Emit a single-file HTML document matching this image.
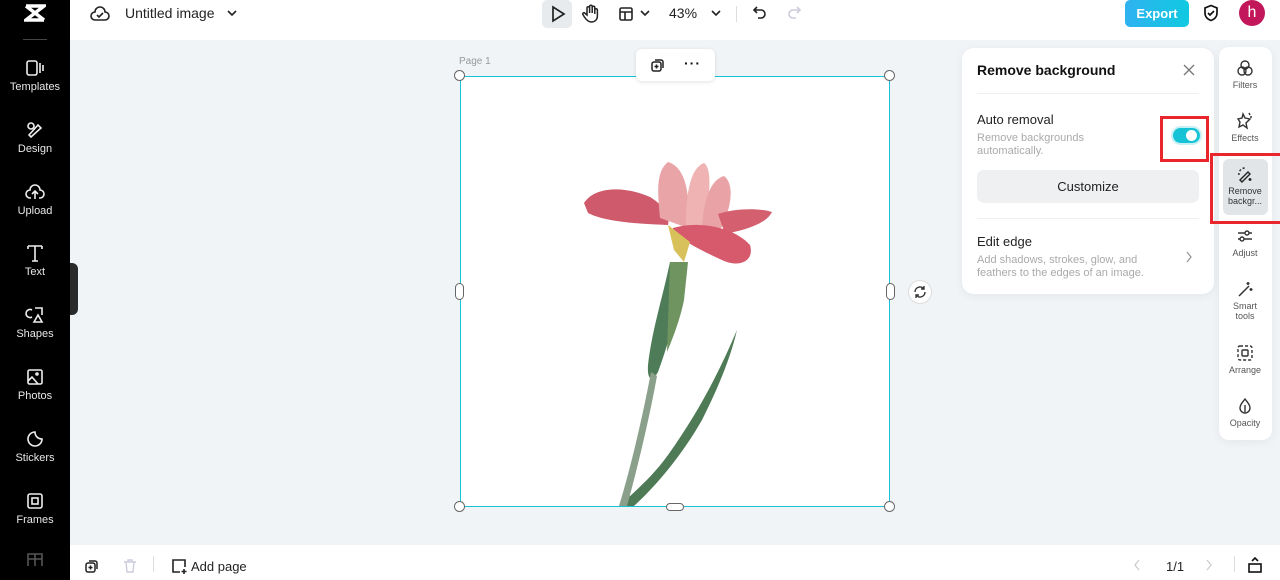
<!DOCTYPE html>
<html><head><meta charset="utf-8"><style>
*{box-sizing:border-box;margin:0;padding:0}
body{width:1280px;height:580px;overflow:hidden;font-family:"Liberation Sans",sans-serif;background:#f1f4f7;position:relative;color:#111}
.abs{position:absolute}
#side{left:0;top:0;width:70px;height:580px;background:#000}
.si{position:absolute;left:0;width:70px;text-align:center;color:#e8e8e8;font-size:11px}
.si svg{display:block;margin:0 auto 4px}
#top{left:70px;top:0;width:1210px;height:40px;background:#fff}
#bot{left:70px;top:545px;width:1210px;height:35px;background:#fff}
.rt{position:absolute;left:0;width:52px;text-align:center;font-size:9px;color:#555;line-height:10px}
.rt svg{display:block;margin:0 auto 3px}
.h{position:absolute;width:11px;height:11px;border:1px solid #666;background:#fff;border-radius:50%}
</style></head><body>
<div id="side" class="abs">
<svg class="abs" style="left:24px;top:4px" width="22" height="18" viewBox="0 0 22 18"><path d="M2 2h18L2 16h18M2 2l18 14" stroke="#fff" stroke-width="3.5" fill="none"/></svg>
<div class="abs" style="left:23px;top:39px;width:24px;height:1px;background:#444"></div>
<div class="si" style="top:59px"><svg width="20" height="18" viewBox="0 0 20 18" fill="none" stroke="#eee" stroke-width="1.6"><rect x="2" y="2" width="10" height="14" rx="2"/><path d="M15 4v10M18 6v6"/></svg>Templates</div>
<div class="si" style="top:121px"><svg width="20" height="18" viewBox="0 0 20 18" fill="none" stroke="#eee" stroke-width="1.6"><circle cx="6" cy="5" r="3"/><path d="M4 14l9-10 3 3-10 9z"/></svg>Design</div>
<div class="si" style="top:183px"><svg width="20" height="18" viewBox="0 0 20 18" fill="none" stroke="#eee" stroke-width="1.6"><path d="M6 15H5a4 4 0 010-8 5 5 0 0110 0 4 4 0 010 8h-1M10 16V9M7 11l3-3 3 3"/></svg>Upload</div>
<div class="si" style="top:244px"><svg width="20" height="18" viewBox="0 0 20 18" fill="none" stroke="#eee" stroke-width="1.6"><path d="M3 2h14M10 2v15M7 17h6M3 2v3M17 2v3"/></svg>Text</div>
<div class="si" style="top:306px"><svg width="20" height="18" viewBox="0 0 20 18" fill="none" stroke="#eee" stroke-width="1.6"><path d="M7 4a4 4 0 100 7M10 2h7v7M9 16l4-7 4 7z"/></svg>Shapes</div>
<div class="si" style="top:368px"><svg width="20" height="18" viewBox="0 0 20 18" fill="none" stroke="#eee" stroke-width="1.6"><rect x="3" y="2" width="14" height="14" rx="1.5"/><path d="M3 13l4-4 6 7"/><circle cx="12" cy="6" r="1"/></svg>Photos</div>
<div class="si" style="top:430px"><svg width="20" height="18" viewBox="0 0 20 18" fill="none" stroke="#eee" stroke-width="1.6"><path d="M17 9a7 7 0 11-7-7c0 4 3 7 7 7z"/></svg>Stickers</div>
<div class="si" style="top:492px"><svg width="20" height="18" viewBox="0 0 20 18" fill="none" stroke="#eee" stroke-width="1.6"><rect x="3" y="2" width="14" height="14" rx="2"/><rect x="7" y="6" width="6" height="6"/></svg>Frames</div>
<svg class="abs" style="left:26px;top:552px" width="18" height="14" viewBox="0 0 18 14" fill="none" stroke="#555" stroke-width="1.6"><path d="M2 14V2h14v12M9 2v12M2 7h14"/></svg>
</div>
<div class="abs" style="left:70px;top:263px;width:8px;height:52px;background:#2a2a2a;border-radius:0 6px 6px 0"></div>

<div id="top" class="abs">
<svg class="abs" style="left:20px;top:5px" width="20" height="18" viewBox="0 0 20 18" fill="none" stroke="#222" stroke-width="1.6"><path d="M6 15H5a4 4 0 010-8 5 5 0 0110 0 4 4 0 010 8z"/><path d="M7 10l2 2 4-4"/></svg>
<div class="abs" style="left:55px;top:5px;font-size:14px;color:#222">Untitled image</div>
<svg class="abs" style="left:157px;top:9px" width="10" height="8"><path d="M1 2l4 4 4-4" stroke="#222" stroke-width="1.6" fill="none"/></svg>
<div class="abs" style="left:472px;top:0;width:30px;height:28px;background:#e8ebee;border-radius:5px"></div>
<svg class="abs" style="left:480px;top:5px" width="16" height="18" viewBox="0 0 16 18"><path d="M3 2l11 7-11 7z" fill="none" stroke="#222" stroke-width="1.7"/></svg>
<svg class="abs" style="left:512px;top:4px" width="18" height="20" viewBox="0 0 18 20" fill="none" stroke="#222" stroke-width="1.5"><path d="M5 11V4a1.3 1.3 0 012.6 0v5V2.5a1.3 1.3 0 012.6 0V9V3.5a1.3 1.3 0 012.6 0V10V6a1.3 1.3 0 012.6 0v6c0 4-3 6-6 6s-5-2-7-5l-1.5-2.5a1.2 1.2 0 012-1.3z"/></svg>
<svg class="abs" style="left:548px;top:6px" width="16" height="16" viewBox="0 0 16 16" fill="none" stroke="#222" stroke-width="1.6"><rect x="2" y="2" width="12" height="12" rx="1.5"/><path d="M2 6h12M7 6v8"/></svg>
<svg class="abs" style="left:570px;top:9px" width="10" height="8"><path d="M1 2l4 4 4-4" stroke="#222" stroke-width="1.6" fill="none"/></svg>
<div class="abs" style="left:599px;top:5px;font-size:14px;color:#222">43%</div>
<svg class="abs" style="left:641px;top:9px" width="10" height="8"><path d="M1 2l4 4 4-4" stroke="#222" stroke-width="1.6" fill="none"/></svg>
<div class="abs" style="left:666px;top:6px;width:1px;height:16px;background:#ddd"></div>
<svg class="abs" style="left:682px;top:5px" width="16" height="16" viewBox="0 0 16 16" fill="none" stroke="#222" stroke-width="1.6"><path d="M5 2L2 5l3 3M2 5h7a4 4 0 010 8H6"/></svg>
<svg class="abs" style="left:716px;top:5px" width="16" height="16" viewBox="0 0 16 16" fill="none" stroke="#ccd" stroke-width="1.6"><path d="M11 2l3 3-3 3M14 5H7a4 4 0 000 8h3"/></svg>
<div class="abs" style="left:1055px;top:0;width:64px;height:27px;border-radius:5px;background:linear-gradient(90deg,#2fb2f0,#10c9e0);color:#fff;font-weight:bold;font-size:13px;text-align:center;line-height:27px">Export</div>
<svg class="abs" style="left:1132px;top:4px" width="18" height="18" viewBox="0 0 18 18" fill="none" stroke="#111" stroke-width="1.7"><path d="M9 1.5l6 2.5v5c0 4-3 6.5-6 7.5-3-1-6-3.5-6-7.5V4z"/><path d="M6 9l2 2 4-4"/></svg>
<div class="abs" style="left:1169px;top:0;width:26px;height:26px;border-radius:50%;background:#c2185b;color:#fff;font-size:16px;text-align:center;line-height:25px">h</div>
</div>

<!-- canvas -->
<div class="abs" style="left:459px;top:56px;font-size:10px;color:#999">Page 1</div>
<div class="abs" style="left:460px;top:76px;width:430px;height:431px;background:#fff;border:1.5px solid #16c3d6"></div>
<svg class="abs" style="left:460px;top:76px" width="430" height="431" viewBox="460 76 430 431">
<path d="M737 330C720 370 700 410 668 455 650 480 630 495 620 506L634 506C657 485 682 455 702 420 717 390 730 360 737 330z" fill="#4e7a55"/>
<path d="M670 262C662 300 652 330 648 365 647 380 652 383 658 372 670 340 680 300 686 262z" fill="#4f7c58"/>
<path d="M651 372C642 420 630 470 619 506L627 506C637 470 649 420 657 376z" fill="#8aa08a"/>
<path d="M670 262L688 262 684 300C680 320 672 340 667 352z" fill="#6f9460"/>
<path d="M584 203C595 186 625 186 650 197 665 206 670 218 668 225 640 224 605 222 588 213z" fill="#cf5a6c"/>
<path d="M660 218C658 195 655 172 668 162 688 168 690 200 688 228z" fill="#e9a4a8"/>
<path d="M686 225C686 195 690 168 704 163 714 170 708 205 704 230z" fill="#efb3b3"/>
<path d="M702 226C704 200 710 180 724 176 736 185 730 212 720 230z" fill="#e9a2a6"/>
<path d="M718 214C735 208 760 208 772 212 766 224 745 230 725 234z" fill="#d4606f"/>
<path d="M673 228C700 220 735 228 750 245 755 262 738 268 722 260 700 250 685 242 673 232z" fill="#d65a6c"/>
<path d="M668 225l6 25 10 12 6-20z" fill="#d8c05a"/>
</svg>
<div class="h" style="left:454px;top:70px"></div><div class="h" style="left:884px;top:70px"></div>
<div class="h" style="left:454px;top:501px"></div><div class="h" style="left:884px;top:501px"></div>
<div class="abs" style="left:455px;top:283px;width:9px;height:17px;border:1px solid #666;background:#fff;border-radius:5px"></div>
<div class="abs" style="left:886px;top:283px;width:9px;height:17px;border:1px solid #666;background:#fff;border-radius:5px"></div>
<div class="abs" style="left:666px;top:503px;width:18px;height:8px;border:1px solid #666;background:#fff;border-radius:5px"></div>
<div class="abs" style="left:908px;top:280px;width:24px;height:24px;border-radius:50%;background:#fff;border:1px solid #ddd"></div>
<svg class="abs" style="left:913px;top:285px" width="14" height="14" viewBox="0 0 14 14" fill="none" stroke="#333" stroke-width="1.4"><path d="M2 7a5 5 0 019-3M12 7a5 5 0 01-9 3M11 1v3H8M3 13v-3h3"/></svg>
<div class="abs" style="left:636px;top:49px;width:79px;height:32px;background:#fff;border-radius:6px;box-shadow:0 1px 4px rgba(0,0,0,.12)"></div>
<svg class="abs" style="left:650px;top:57px" width="16" height="16" viewBox="0 0 16 16" fill="none" stroke="#222" stroke-width="1.5"><rect x="2" y="5" width="9" height="9" rx="2"/><path d="M5 3h6a2 2 0 012 2v6M6.5 7.5v4M4.5 9.5h4"/></svg>
<div class="abs" style="left:684px;top:55px;font-size:14px;font-weight:bold;letter-spacing:1px">···</div>

<!-- panel -->
<div class="abs" style="left:962px;top:48px;width:252px;height:246px;background:#fff;border-radius:12px;box-shadow:0 2px 10px rgba(0,0,0,.06)">
<div class="abs" style="left:15px;top:14px;font-size:14px;font-weight:bold">Remove background</div>
<svg class="abs" style="left:221px;top:16px" width="12" height="12"><path d="M1 1l10 10M11 1L1 11" stroke="#777" stroke-width="1.3"/></svg>
<div class="abs" style="left:15px;top:45px;width:222px;height:1px;background:#eee"></div>
<div class="abs" style="left:15px;top:64px;font-size:13px;color:#222">Auto removal</div>
<div class="abs" style="left:15px;top:84px;font-size:11px;color:#aaa;line-height:13px">Remove backgrounds<br>automatically.</div>
<div class="abs" style="left:211px;top:80px;width:27px;height:15px;border-radius:8px;background:#16c3d6;box-shadow:0 0 0 2px #c6f0f4"></div>
<div class="abs" style="left:224px;top:82px;width:11px;height:11px;border-radius:50%;background:#fff"></div>
<div class="abs" style="left:15px;top:122px;width:222px;height:33px;border-radius:7px;background:#eef0f2;text-align:center;line-height:33px;font-size:13px;color:#222">Customize</div>
<div class="abs" style="left:15px;top:170px;width:222px;height:1px;background:#eee"></div>
<div class="abs" style="left:15px;top:186px;font-size:13px;color:#222">Edit edge</div>
<div class="abs" style="left:15px;top:206px;font-size:11px;color:#aaa;line-height:13px">Add shadows, strokes, glow, and<br>feathers to the edges of an image.</div>
<svg class="abs" style="left:223px;top:203px" width="8" height="12"><path d="M2 1l4 5-4 5" stroke="#999" stroke-width="1.3" fill="none"/></svg>
</div>
<div class="abs" style="left:1160px;top:116px;width:49px;height:46px;border:3px solid #e8262c"></div>

<!-- right toolbar -->
<div class="abs" style="left:1219px;top:47px;width:53px;height:393px;background:#fff;border-radius:10px;box-shadow:0 2px 10px rgba(0,0,0,.06)">
<div class="rt" style="top:12px"><svg width="18" height="18" viewBox="0 0 18 18" fill="none" stroke="#333" stroke-width="1.4"><circle cx="9" cy="6" r="4"/><circle cx="6" cy="12" r="4"/><circle cx="12" cy="12" r="4"/></svg>Filters</div>
<div class="rt" style="top:65px"><svg width="18" height="18" viewBox="0 0 18 18" fill="none" stroke="#333" stroke-width="1.4"><path d="M7 2l2 4 5 1-4 4 1 5-4-3-4 2 1-5-2-3 4-1zM13 1l1 2M16 5l-2 0"/></svg>Effects</div>
<div class="abs" style="left:4px;top:112px;width:45px;height:56px;background:#e2e5e8;border-radius:6px"></div>
<div class="rt" style="top:118px;color:#333"><svg width="18" height="18" viewBox="0 0 18 18" fill="none" stroke="#222" stroke-width="1.4"><path d="M3 10a6 6 0 016-7" stroke-dasharray="2 2"/><path d="M4 15l8-8 2 2-8 8z"/><path d="M14 13v3M12.5 14.5h3"/></svg>Remove<br>backgr...</div>
<div class="rt" style="top:180px"><svg width="18" height="18" viewBox="0 0 18 18" fill="none" stroke="#333" stroke-width="1.4"><path d="M2 6h14M2 12h14"/><circle cx="11" cy="6" r="2" fill="#fff"/><circle cx="6" cy="12" r="2" fill="#fff"/></svg>Adjust</div>
<div class="rt" style="top:233px"><svg width="18" height="18" viewBox="0 0 18 18" fill="none" stroke="#333" stroke-width="1.5"><path d="M3 16l10-10M12 2v3M10.5 3.5h3M15 8v3M13.5 9.5h3"/></svg>Smart<br>tools</div>
<div class="rt" style="top:297px"><svg width="18" height="18" viewBox="0 0 18 18" fill="none" stroke="#333" stroke-width="1.4"><rect x="2" y="2" width="14" height="14" rx="2" stroke-dasharray="3 2"/><rect x="6" y="6" width="6" height="6" rx="1"/></svg>Arrange</div>
<div class="rt" style="top:350px"><svg width="18" height="18" viewBox="0 0 18 18" fill="none" stroke="#333" stroke-width="1.4"><path d="M9 2c3 4 5 6 5 9a5 5 0 01-10 0c0-3 2-5 5-9z"/><path d="M9 8v7"/></svg>Opacity</div>
</div>

<div id="bot" class="abs">
<svg class="abs" style="left:14px;top:13px" width="16" height="16" viewBox="0 0 16 16" fill="none" stroke="#222" stroke-width="1.5"><rect x="2" y="5" width="9" height="9" rx="2"/><path d="M5 3h6a2 2 0 012 2v6M6.5 7.5v4M4.5 9.5h4"/></svg>
<svg class="abs" style="left:52px;top:13px" width="16" height="16" viewBox="0 0 16 16" fill="none" stroke="#ccd" stroke-width="1.4"><path d="M2 4h12M6 4V2h4v2M4 4l1 10h6l1-10"/></svg>
<div class="abs" style="left:83px;top:11px;width:1px;height:16px;background:#ddd"></div>
<svg class="abs" style="left:100px;top:12px" width="18" height="18" viewBox="0 0 18 18" fill="none" stroke="#222" stroke-width="1.6"><path d="M10 15H3V3h12v7M14 12v5M11.5 14.5h5"/></svg>
<div class="abs" style="left:121px;top:14px;font-size:13px;color:#222">Add page</div>
<svg class="abs" style="left:1063px;top:14px" width="8" height="12"><path d="M6 1L2 6l4 5" stroke="#ccc" stroke-width="1.3" fill="none"/></svg>
<div class="abs" style="left:1096px;top:14px;font-size:13px;color:#222">1/1</div>
<svg class="abs" style="left:1135px;top:14px" width="8" height="12"><path d="M2 1l4 5-4 5" stroke="#ccc" stroke-width="1.3" fill="none"/></svg>
<div class="abs" style="left:1164px;top:11px;width:1px;height:16px;background:#ddd"></div>
<svg class="abs" style="left:1177px;top:11px" width="16" height="18" viewBox="0 0 16 18" fill="none" stroke="#111" stroke-width="1.6"><rect x="2" y="8" width="12" height="8"/><path d="M5 5l3-3 3 3"/></svg>
</div>
<div class="abs" style="left:1210px;top:153px;width:70px;height:71px;border:3px solid #e8262c;border-right:none"></div>
</body></html>
